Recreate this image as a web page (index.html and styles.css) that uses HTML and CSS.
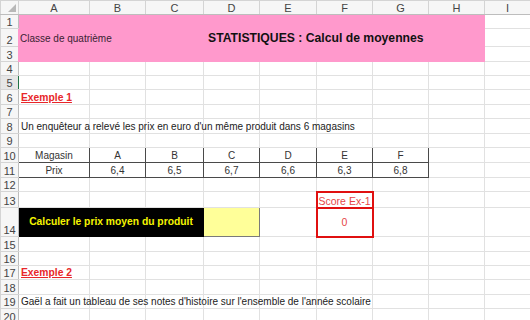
FILE: index.html
```html
<!DOCTYPE html>
<html lang="fr">
<head>
  <meta charset="UTF-8" />
  <title>Statistiques</title>
  <link rel="stylesheet" href="styles.css">
</head>
<body>
  <table class="sheet">
    <colgroup>
      <col class="c-rh"><col class="c-a"><col class="c-b"><col class="c-c"><col class="c-d">
      <col class="c-e"><col class="c-f"><col class="c-g"><col class="c-h"><col class="c-i">
    </colgroup>
    <thead>
      <tr class="h14">
        <th class="corner"><svg width="17" height="13" viewBox="0 0 17 13"><polygon points="15,3 15,11 7,11" fill="#b8b8b8"/></svg></th>
        <th>A</th><th>B</th><th>C</th><th>D</th><th>E</th><th>F</th><th>G</th><th>H</th><th>I</th>
      </tr>
    </thead>
    <tbody>
      <tr class="h14">
        <th>1</th>
        <td class="banner" colspan="8" rowspan="3">
          <div class="banner-row">
            <span class="level">Classe de quatrième</span>
            <span class="title">STATISTIQUES : Calcul de moyennes</span>
          </div>
        </td>
        <td></td>
      </tr>
      <tr class="h18"><th>2</th><td></td></tr>
      <tr class="h15"><th>3</th><td></td></tr>
      <tr class="h14"><th>4</th><td></td><td></td><td></td><td></td><td></td><td></td><td></td><td></td><td></td></tr>
      <tr class="h14 selected"><th>5</th><td></td><td></td><td></td><td></td><td></td><td></td><td></td><td></td><td></td></tr>
      <tr class="h15"><th>6</th><td class="example">Exemple 1</td><td></td><td></td><td></td><td></td><td></td><td></td><td></td><td></td></tr>
      <tr class="h14"><th>7</th><td></td><td></td><td></td><td></td><td></td><td></td><td></td><td></td><td></td></tr>
      <tr class="h15"><th>8</th><td>Un enquêteur a relevé les prix en euro d'un même produit dans 6 magasins</td><td></td><td></td><td></td><td></td><td></td><td></td><td></td><td></td></tr>
      <tr class="h14"><th>9</th><td></td><td></td><td></td><td></td><td></td><td></td><td></td><td></td><td></td></tr>
      <tr class="h15">
        <th>10</th>
        <td class="data">Magasin</td><td class="data">A</td><td class="data">B</td><td class="data">C</td>
        <td class="data">D</td><td class="data">E</td><td class="data">F</td><td></td><td></td>
      </tr>
      <tr class="h15">
        <th>11</th>
        <td class="data">Prix</td><td class="data">6,4</td><td class="data">6,5</td><td class="data">6,7</td>
        <td class="data">6,6</td><td class="data">6,3</td><td class="data">6,8</td><td></td><td></td>
      </tr>
      <tr class="h14"><th>12</th><td></td><td></td><td></td><td></td><td></td><td></td><td></td><td></td><td></td></tr>
      <tr class="h16"><th>13</th><td></td><td></td><td></td><td></td><td></td><td class="score score-top">Score Ex-1</td><td></td><td></td><td></td></tr>
      <tr class="h29">
        <th>14</th>
        <td class="task" colspan="3">Calculer le prix moyen du produit</td>
        <td class="answer"></td>
        <td></td>
        <td class="score score-bottom">0</td>
        <td></td><td></td><td></td>
      </tr>
      <tr class="h15"><th>15</th><td></td><td></td><td></td><td></td><td></td><td></td><td></td><td></td><td></td></tr>
      <tr class="h14"><th>16</th><td></td><td></td><td></td><td></td><td></td><td></td><td></td><td></td><td></td></tr>
      <tr class="h14"><th>17</th><td class="example">Exemple 2</td><td></td><td></td><td></td><td></td><td></td><td></td><td></td><td></td></tr>
      <tr class="h15"><th>18</th><td></td><td></td><td></td><td></td><td></td><td></td><td></td><td></td><td></td></tr>
      <tr class="h14"><th>19</th><td>Gaël a fait un tableau de ses notes d'histoire sur l'ensemble de l'année scolaire</td><td></td><td></td><td></td><td></td><td></td><td></td><td></td><td></td></tr>
      <tr class="h15"><th>20</th><td></td><td></td><td></td><td></td><td></td><td></td><td></td><td></td><td></td></tr>
    </tbody>
  </table>
</body>
</html>
```

FILE: styles.css
```css
body {
  margin: 0;
  padding: 0;
  background: #fff;
  font-family: "Liberation Sans", Arial, sans-serif;
  font-size: 10px;
  color: #222;
  overflow: hidden;
}

.sheet {
  border-collapse: collapse;
  table-layout: fixed;
  width: 530px;
}

.c-rh { width: 18px; }
.c-a { width: 71px; }
.c-b { width: 56px; }
.c-c { width: 58px; }
.c-d { width: 56px; }
.c-e { width: 57px; }
.c-f { width: 56px; }
.c-g { width: 56px; }
.c-h { width: 56px; }
.c-i { width: 46px; }

.h14 { height: 14px; }
.h15 { height: 15px; }
.h16 { height: 16px; }
.h18 { height: 18px; }
.h29 { height: 29px; }

th {
  background: #f6f6f6;
  color: #444;
  font-weight: normal;
  font-size: 11px;
  line-height: 12px;
  border: 1px solid #d4d4d4;
  padding: 0;
  text-align: center;
  vertical-align: bottom;
}

thead th {
  border-bottom-color: #bdbdbd;
  vertical-align: middle;
}

tbody th {
  border-right-color: #bdbdbd;
}

.corner svg {
  display: block;
}

.selected th {
  background: #e6e6e6;
  border-right: 1px solid #217346;
}

td {
  border: 1px solid #e1e1e1;
  padding: 0 2px;
  white-space: nowrap;
  line-height: 12px;
  vertical-align: bottom;
}

.banner {
  background: #ff99cc;
  border-color: #ff99cc;
  vertical-align: middle;
  padding: 0 0 0 1px;
}

.banner-row {
  display: flex;
  align-items: baseline;
}

.level {
  width: 188px;
  color: #3a1f33;
}

.title {
  font-weight: bold;
  font-size: 12.2px;
  color: #111;
}

.example {
  color: #e8262a;
  font-weight: bold;
  font-size: 10.3px;
  text-decoration: underline;
}

.data {
  border: 1px solid #4a4a4a;
  text-align: center;
  color: #333;
}

.task {
  background: #000;
  border-color: #000;
  color: #f5f500;
  font-weight: bold;
  font-size: 10.3px;
  text-align: center;
  vertical-align: middle;
}

.answer {
  background: #ffff99;
  border: 1px solid #7a7a7a;
}

.score {
  color: #e64646;
  font-size: 10.5px;
  text-align: center;
  padding: 0;
  border: 2px solid #e01010;
}

.score-top {
  vertical-align: bottom;
}

.score-bottom {
  vertical-align: middle;
}
```
